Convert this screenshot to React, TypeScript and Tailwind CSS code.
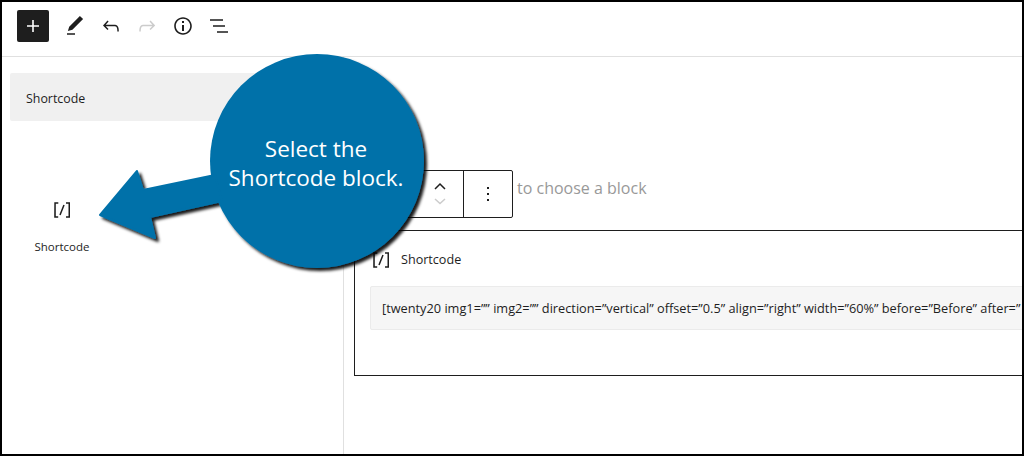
const font = "[font-family:'Open_Sans','Noto_Sans',sans-serif]";

function Icon({ d, className }: { d: string; className?: string }) {
  return (
    <svg viewBox="0 0 24 24" width="24" height="24" fill="currentColor" className={className}>
      <path d={d} />
    </svg>
  );
}

const icons = {
  plus: "M18 11.2h-5.2V6h-1.6v5.2H6v1.6h5.2V18h1.6v-5.2H18z",
  pencil: "M20.1 5.1L16.9 2 6.2 12.7l-1.3 4.4 4.5-1.3L20.1 5.1zM4 20.8h8v-1.5H4v1.5z",
  undo: "M18.3 11.7c-.6-.6-1.4-.9-2.3-.9H6.7l2.9-3.3-1.1-1-4.5 5L8.5 16l1-1-2.7-2.7H16c.5 0 .9.2 1.3.5 1 1 1 3.4 1 4.5v.3h1.5v-.2c0-1.5 0-4.3-1.5-5.7z",
  redo: "M15.6 6.5l-1.1 1 2.9 3.3H8c-.9 0-1.7.3-2.3.9-1.4 1.5-1.4 4.2-1.4 5.6v.2h1.5v-.3c0-1.1 0-3.5 1-4.5.3-.3.7-.5 1.3-.5h9.2L14.5 15l1.1 1.1 4.6-4.6-4.6-5z",
  info: "M12 3.2c-4.8 0-8.8 3.9-8.8 8.8 0 4.8 3.9 8.8 8.8 8.8 4.8 0 8.8-3.9 8.8-8.8 0-4.8-4-8.8-8.8-8.8zm0 16c-4 0-7.2-3.3-7.2-7.2C4.8 8 8 4.8 12 4.8s7.2 3.3 7.2 7.2c0 4-3.2 7.2-7.2 7.2zM11 17h2v-6h-2v6zm0-8h2V7h-2v2z",
  list: "M3 6.7h13V5.2H3zM6 12.7h12v-1.5H6zM10 18.7h11v-1.5H10z",
  shortcode: "M16 4.2v1.5h2.5v12.5H16v1.5h4V4.2h-4zM4.2 19.8h4v-1.5H5.8V5.8h2.5V4.2h-4l-.1 15.6zm5.1-3.1l1.4.6 4-10-1.4-.6-4 10z",
  more: "M13 19h-2v-2h2v2zm0-6h-2v-2h2v2zm0-6h-2V5h2v2z",
};

export default function App() {
  return (
    <div className={`relative flex h-[456px] w-[1024px] flex-col overflow-hidden border-2 border-black bg-white text-[#1e1e1e] ${font}`}>
      {/* top bar */}
      <header className="flex h-[55px] shrink-0 items-center gap-3 border-b border-[#e0e0e0] pb-[6px] pl-[15px]">
        <button className="mr-[2px] flex h-8 w-8 items-center justify-center rounded-[2px] bg-[#1e1e1e] text-white">
          <Icon d={icons.plus} />
        </button>
        <Icon d={icons.pencil} />
        <Icon d={icons.undo} />
        <Icon d={icons.redo} className="text-[#cccccc]" />
        <Icon d={icons.info} />
        <Icon d={icons.list} />
      </header>

      <div className="flex min-h-0 flex-1">
        {/* inserter */}
        <aside className="w-[342px] shrink-0 border-r border-[#e0e0e0] pl-2 pt-4 pr-2">
          <div className="flex h-12 items-center rounded-[2px] bg-[#f0f0f0] pl-4 pt-1 text-[12.4px]">Shortcode</div>
          <div className="mt-[77px] flex w-[104px] flex-col items-center">
            <Icon d={icons.shortcode} />
            <div className="mt-[17px] text-[11.5px] leading-4">Shortcode</div>
          </div>
        </aside>

        {/* editor */}
        <main className="min-w-0 flex-1 pl-[10px] pt-[113px]">
          <div className="flex h-12 items-center">
            <div className="flex h-12 w-[159px] shrink-0 rounded-[2px] border border-[#1e1e1e]">
              <div className="w-[109px] border-r border-[#1e1e1e]" />
              <div className="relative w-0">
                <svg viewBox="0 0 24 48" width="24" height="48" className="absolute -left-[36px] -top-px" fill="none" strokeWidth="1.5">
                  <path d="M7 19l5-5 5 5" stroke="#1e1e1e" />
                  <path d="M7 29l5 4.5 5-4.5" stroke="#cccccc" />
                </svg>
              </div>
              <div className="flex flex-1 items-center justify-center">
                <Icon d={icons.more} />
              </div>
            </div>
            <span className="ml-1 whitespace-nowrap pb-3 text-[16px] text-[#999999]">to choose a block</span>
          </div>

          <section className="mt-3 h-[146px] w-[800px] border border-[#1e1e1e] pl-[15px] pt-4">
            <div className="flex h-6 items-center gap-2 pt-px text-[12.6px] font-medium text-[#1e1e1e]">
              <Icon d={icons.shortcode} className="-ml-px" />
              <span className="pt-px">Shortcode</span>
            </div>
            <div className="mt-[15px] flex h-[44px] items-center whitespace-nowrap rounded-[2px] border border-[#ebebeb] bg-[#f6f6f6] pl-[11px] pt-px text-[12.75px] text-[#1e1e1e]">
              [twenty20 img1=”” img2=”” direction=”vertical” offset=”0.5” align=”right” width=”60%” before=”Before” after=”
            </div>
          </section>
        </main>
      </div>

      {/* callout drawn over the screenshot */}
      <svg viewBox="0 0 1024 456" width="1024" height="456" className="absolute -left-[2px] -top-[2px]">
        <defs>
          <filter id="callout-shadow" x="-10%" y="-10%" width="125%" height="125%">
            <feDropShadow dx="3" dy="3" stdDeviation="1.5" floodColor="#000" floodOpacity="0.9" />
          </filter>
        </defs>
        <g filter="url(#callout-shadow)" fill="#0071a9">
          <circle cx="317" cy="161" r="107" />
          <path d="M100 215L137 171L143 190L215 175L222 201L150 217L155 238Z" strokeLinejoin="round" stroke="#0071a9" strokeWidth="2" />
        </g>
      </svg>
      <div className="absolute left-[204px] top-[132px] w-[220px] text-center text-[22.5px] leading-[29px] text-white">
        Select the
        <br />
        Shortcode block.
      </div>
    </div>
  );
}
